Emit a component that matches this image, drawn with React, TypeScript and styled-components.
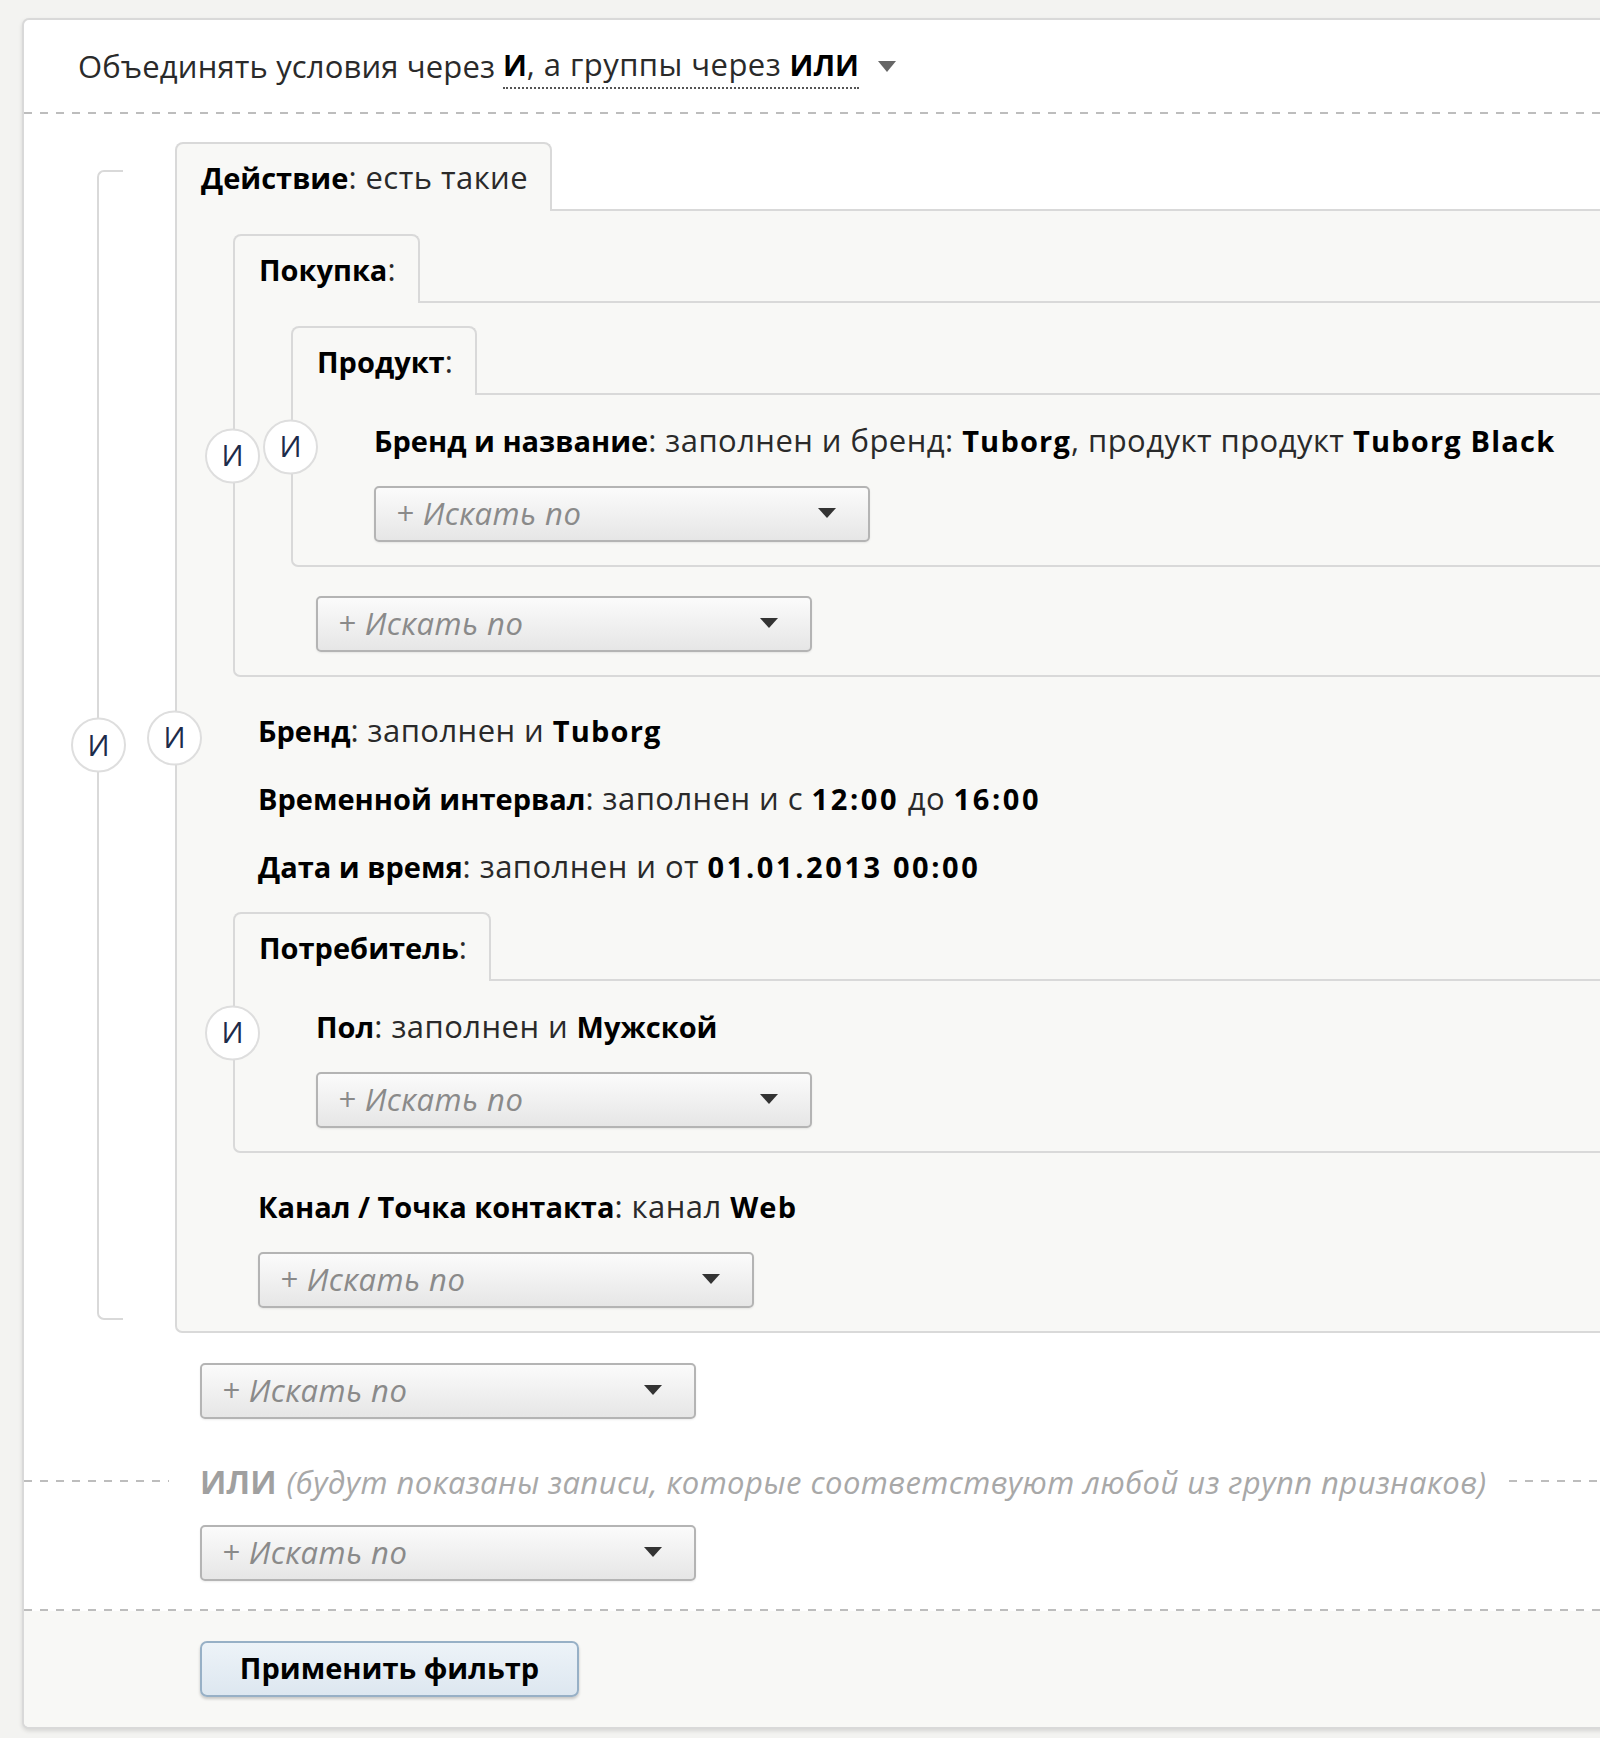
import React from 'react';
import styled, { createGlobalStyle } from 'styled-components';

const GlobalStyle = createGlobalStyle`
  html, body {
    margin: 0;
    padding: 0;
  }
  body {
    background: #f3f3f1;
    font-family: 'Open Sans', 'Noto Sans', sans-serif;
    font-size: 31px;
    letter-spacing: 0.45px;
    color: #2a2a2a;
    overflow-x: hidden;
  }
`;

const line = '#d9d9d9';
const tint = '#f8f8f6';

const Page = styled.div`
  padding: 18px 0 8px 22px;
`;

const Panel = styled.div`
  width: calc(100% + 40px);
  background: #fff;
  border: 2px solid ${line};
  border-radius: 7px;
  box-shadow: 0 2px 4px rgba(0, 0, 0, 0.12);
  overflow: hidden;
`;

const Header = styled.div`
  height: 92px;
  display: flex;
  align-items: center;
  padding-left: 54px;
  letter-spacing: 0.15px;
  white-space: nowrap;
`;

const Switcher = styled.span`
  border-bottom: 2px dotted #555;
  padding-bottom: 2px;
  margin-left: 0.25em;
  letter-spacing: 0.45px;
`;

const Caret = styled.span`
  display: inline-block;
  margin-left: 19px;
  border-left: 9px solid transparent;
  border-right: 9px solid transparent;
  border-top: 11px solid #666;
`;

const Dashed = styled.div<{ $grow?: boolean }>`
  height: 2px;
  flex: ${(p) => (p.$grow ? 1 : 'none')};
  background: repeating-linear-gradient(to right, #bdbdbd 0 8px, transparent 8px 16px);
`;

const Main = styled.div`
  display: flex;
  flex-direction: column;
  padding: 28px 0 28px 0;
`;

const GroupRow = styled.div`
  display: flex;
  padding-left: 73px;
`;

const Bracket = styled.div`
  position: relative;
  width: 24px;
  flex: none;
  margin: 28px 52px 13px 0;
  border: 2px solid ${line};
  border-right: none;
  border-radius: 7px 0 0 7px;
`;

const Joint = styled.div`
  position: absolute;
  left: -28px;
  top: 50%;
  transform: translateY(-50%);
  width: 55px;
  height: 55px;
  box-sizing: border-box;
  border: 2px solid #dedede;
  border-radius: 50%;
  background: #fff;
  display: flex;
  align-items: center;
  justify-content: center;
  color: #1d2b4a;
  font-size: 29px;
  letter-spacing: 0;
  line-height: 1;
  padding-bottom: 3px;
  z-index: 1;
`;

const Group = styled.div`
  position: relative;
  display: flex;
  flex-direction: column;
  flex: 1;
`;

const TabRow = styled.div`
  display: flex;
  height: 69px;
`;

const Tab = styled.div`
  box-sizing: border-box;
  display: flex;
  align-items: center;
  padding: 0 22px 2px 24px;
  border: 2px solid ${line};
  border-bottom: none;
  border-radius: 8px 8px 0 0;
  background: ${tint};
  white-space: nowrap;
`;

const TabFill = styled.div`
  flex: 1;
  border-bottom: 2px solid ${line};
`;

const Body = styled.div`
  display: flex;
  flex-direction: column;
  align-items: flex-start;
  gap: 23px;
  padding: 23px 0 23px 56px;
  background: ${tint};
  border-left: 2px solid ${line};
  border-bottom: 2px solid ${line};
  border-bottom-left-radius: 7px;
`;

const Condition = styled.div`
  margin-left: 25px;
  line-height: 45px;
  height: 45px;
  white-space: nowrap;
`;

const Nested = styled.div`
  align-self: stretch;
  display: flex;
  margin-bottom: 6px;

  & + ${Condition} {
    margin-top: 2px;
  }
`;

const B = styled.b`
  font-weight: 700;
  font-size: 29px;
  letter-spacing: 0;
  color: #000;
`;

// Latin names and figures run wider in the original face
const Value = styled(B)<{ $digits?: boolean }>`
  letter-spacing: ${(p) => (p.$digits ? '2.6px' : '1.2px')};
`;

const Select = styled.div<{ $indent?: number }>`
  box-sizing: border-box;
  margin-left: ${(p) => p.$indent ?? 25}px;
  width: 496px;
  height: 56px;
  flex: none;
  display: flex;
  align-items: center;
  justify-content: space-between;
  padding: 0 32px 2px 20px;
  border: 2px solid #b4b4b4;
  border-radius: 5px;
  background: linear-gradient(#fbfbfb, #e6e6e6);
  box-shadow: 0 1px 2px rgba(0, 0, 0, 0.08);
  color: #8a8a8a;
  font-style: italic;
`;

const Arrow = styled.span`
  border-left: 9px solid transparent;
  border-right: 9px solid transparent;
  border-top: 10px solid #333;
`;

const Tail = styled.div<{ $top?: number }>`
  display: flex;
  flex-direction: column;
  align-items: flex-start;
  padding-left: 176px;
  margin-top: ${(p) => p.$top ?? 0}px;
`;

const OrRow = styled.div`
  display: flex;
  align-items: center;
  height: 44px;
  margin: 40px 0 22px;
  white-space: nowrap;
`;

const OrText = styled.div`
  margin: 0 22px 0 31px;
  color: #a8a8a8;
  font-style: italic;
`;

const OrWord = styled.b`
  font-style: normal;
  font-size: 32px;
  letter-spacing: 0;
  color: #a0a0a0;
  margin-right: 10px;
`;

const Footer = styled.div`
  background: ${tint};
  padding: 30px 0 30px 176px;
`;

const Apply = styled.button`
  box-sizing: border-box;
  width: 379px;
  height: 56px;
  padding: 0 0 3px;
  border: 2px solid #97b0c6;
  border-radius: 7px;
  background: linear-gradient(#edf3f8, #dde7f0);
  box-shadow: 0 2px 3px rgba(0, 0, 0, 0.2);
  font-family: inherit;
  font-size: 29px;
  font-weight: 700;
  color: #000;
`;

function SearchBy({ indent }: { indent?: number }) {
  return (
    <Select $indent={indent}>
      <span>+ Искать по</span>
      <Arrow />
    </Select>
  );
}

function Block({
  title,
  rest,
  children,
}: {
  title: string;
  rest?: string;
  children: React.ReactNode;
}) {
  return (
    <Group>
      <Joint>И</Joint>
      <TabRow>
        <Tab>
          <span>
            <B>{title}</B>:{rest ? ` ${rest}` : ''}
          </span>
        </Tab>
        <TabFill />
      </TabRow>
      <Body>{children}</Body>
    </Group>
  );
}

export default function App() {
  return (
    <>
      <GlobalStyle />
      <Page>
        <Panel>
          <Header>
            Объединять условия через
            <Switcher>
              <B>И</B>, а группы через <B>ИЛИ</B>
            </Switcher>
            <Caret />
          </Header>
          <Dashed />
          <Main>
            <GroupRow>
              <Bracket>
                <Joint>И</Joint>
              </Bracket>
              <Block title="Действие" rest="есть такие">
                <Nested>
                  <Block title="Покупка">
                    <Nested>
                      <Block title="Продукт">
                        <Condition>
                          <B>Бренд и название</B>: заполнен и бренд: <Value>Tuborg</Value>, продукт продукт{' '}
                          <Value>Tuborg Black</Value>
                        </Condition>
                        <SearchBy />
                      </Block>
                    </Nested>
                    <SearchBy />
                  </Block>
                </Nested>
                <Condition>
                  <B>Бренд</B>: заполнен и <Value>Tuborg</Value>
                </Condition>
                <Condition>
                  <B>Временной интервал</B>: заполнен и с <Value $digits>12:00</Value> до{' '}
                  <Value $digits>16:00</Value>
                </Condition>
                <Condition>
                  <B>Дата и время</B>: заполнен и от <Value $digits>01.01.2013 00:00</Value>
                </Condition>
                <Nested>
                  <Block title="Потребитель">
                    <Condition>
                      <B>Пол</B>: заполнен и <B>Мужской</B>
                    </Condition>
                    <SearchBy />
                  </Block>
                </Nested>
                <Condition>
                  <B>Канал / Точка контакта</B>: канал <Value>Web</Value>
                </Condition>
                <SearchBy />
              </Block>
            </GroupRow>
            <Tail $top={30}>
              <SearchBy indent={0} />
            </Tail>
            <OrRow>
              <Dashed style={{ width: 145 }} />
              <OrText>
                <OrWord>ИЛИ</OrWord>(будут показаны записи, которые соответствуют любой из групп признаков)
              </OrText>
              <Dashed $grow />
            </OrRow>
            <Tail>
              <SearchBy indent={0} />
            </Tail>
          </Main>
          <Dashed />
          <Footer>
            <Apply>Применить фильтр</Apply>
          </Footer>
        </Panel>
      </Page>
    </>
  );
}
